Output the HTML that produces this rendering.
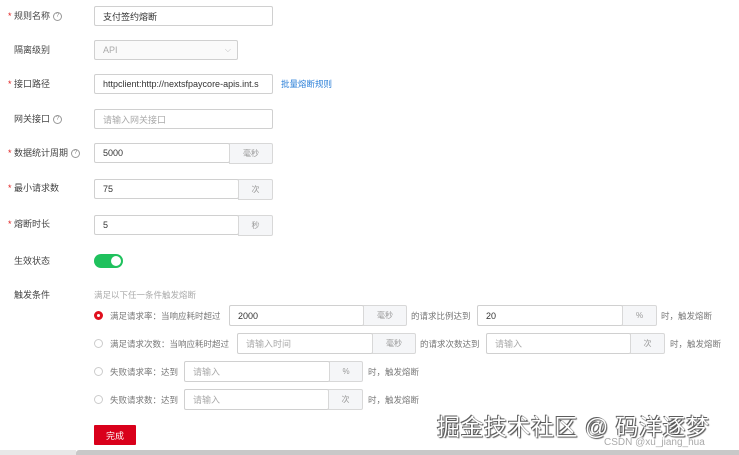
<!DOCTYPE html><html><head><meta charset="utf-8"><style>
*{box-sizing:border-box;margin:0;padding:0}
body{width:739px;height:455px;background:#fff;position:relative;overflow:hidden;font-family:"Liberation Sans","Noto Sans CJK SC",sans-serif;font-size:9px;color:#555}
.a{position:absolute;white-space:nowrap}
.lab{position:absolute;left:14px;font-size:9px;color:#444;line-height:12px}
.lab .s{position:absolute;left:-6px;color:#e02020}
.q{display:inline-block;width:9px;height:9px;border:1px solid #999;border-radius:50%;font-size:6px;line-height:7px;text-align:center;color:#888;margin-left:3px;vertical-align:middle}
.in{position:absolute;border:1px solid #d0d0d0;border-radius:2px;background:#fff;padding-left:8px;font-size:9px;color:#333;display:flex;align-items:center}
.ph{color:#aaa}
.ad{position:absolute;border:1px solid #d8d8d8;background:#f5f6f8;border-radius:0 2px 2px 0;color:#999;font-size:8px;display:flex;align-items:center;justify-content:center}
.r{position:absolute;width:9px;height:9px;border:1px solid #ccc;border-radius:50%}
.t{position:absolute;font-size:8.5px;color:#777;line-height:12px}
</style></head><body>
<div class="lab" style="top:10px"><span class="s">*</span>规则名称<span class="q">?</span></div>
<div class="in" style="left:94px;top:6px;width:179px;height:20px">支付签约熔断</div>
<div class="lab" style="top:44px">隔离级别</div>
<div class="in" style="left:94px;top:40px;width:144px;height:20px;color:#aaa;background:#fafafa">API<span class="a" style="right:6px;color:#bbb;font-size:8px">⌵</span></div>
<div class="lab" style="top:78px"><span class="s">*</span>接口路径</div>
<div class="in" style="left:94px;top:74px;width:179px;height:20px;overflow:hidden">httpclient:http://nextsfpaycore-apis.int.s</div>
<div class="a" style="left:281px;top:78px;color:#2a7fd8;font-size:8.5px">批量熔断规则</div>
<div class="lab" style="top:113px">网关接口<span class="q">?</span></div>
<div class="in" style="left:94px;top:109px;width:179px;height:20px"><span class="ph">请输入网关接口</span></div>
<div class="lab" style="top:147px"><span class="s">*</span>数据统计周期<span class="q">?</span></div>
<div class="in" style="left:94px;top:143px;width:136px;height:20px">5000</div>
<div class="ad" style="left:229px;top:143px;width:44px;height:21px">毫秒</div>
<div class="lab" style="top:182px"><span class="s">*</span>最小请求数</div>
<div class="in" style="left:94px;top:179px;width:145px;height:20px">75</div>
<div class="ad" style="left:238px;top:179px;width:35px;height:21px">次</div>
<div class="lab" style="top:218px"><span class="s">*</span>熔断时长</div>
<div class="in" style="left:94px;top:215px;width:145px;height:20px">5</div>
<div class="ad" style="left:238px;top:215px;width:35px;height:21px">秒</div>
<div class="lab" style="top:255px">生效状态</div>
<div class="a" style="left:94px;top:254px;width:29px;height:14px;background:#1fc15d;border-radius:7px"><div class="a" style="right:2px;top:2px;width:10px;height:10px;background:#fff;border-radius:50%"></div></div>
<div class="lab" style="top:289px">触发条件</div>
<div class="t" style="left:94px;top:289px;color:#aaa">满足以下任一条件触发熔断</div>

<div class="r" style="left:94px;top:311px;border:3px solid #e0101e"></div>
<div class="t" style="left:110px;top:310px">满足请求率：当响应耗时超过</div>
<div class="in" style="left:229px;top:305px;width:135px;height:21px">2000</div>
<div class="ad" style="left:363px;top:305px;width:44px;height:21px">毫秒</div>
<div class="t" style="left:411px;top:310px">的请求比例达到</div>
<div class="in" style="left:477px;top:305px;width:146px;height:21px">20</div>
<div class="ad" style="left:622px;top:305px;width:35px;height:21px">%</div>
<div class="t" style="left:661px;top:310px">时，触发熔断</div>

<div class="r" style="left:94px;top:339px"></div>
<div class="t" style="left:110px;top:338px">满足请求次数：当响应耗时超过</div>
<div class="in" style="left:237px;top:333px;width:136px;height:21px"><span class="ph">请输入时间</span></div>
<div class="ad" style="left:372px;top:333px;width:44px;height:21px">毫秒</div>
<div class="t" style="left:420px;top:338px">的请求次数达到</div>
<div class="in" style="left:486px;top:333px;width:145px;height:21px"><span class="ph">请输入</span></div>
<div class="ad" style="left:630px;top:333px;width:35px;height:21px">次</div>
<div class="t" style="left:670px;top:338px">时，触发熔断</div>

<div class="r" style="left:94px;top:367px"></div>
<div class="t" style="left:110px;top:366px">失败请求率：达到</div>
<div class="in" style="left:184px;top:361px;width:146px;height:21px"><span class="ph">请输入</span></div>
<div class="ad" style="left:329px;top:361px;width:34px;height:21px">%</div>
<div class="t" style="left:368px;top:366px">时，触发熔断</div>

<div class="r" style="left:94px;top:395px"></div>
<div class="t" style="left:110px;top:394px">失败请求数：达到</div>
<div class="in" style="left:184px;top:389px;width:145px;height:21px"><span class="ph">请输入</span></div>
<div class="ad" style="left:328px;top:389px;width:35px;height:21px">次</div>
<div class="t" style="left:368px;top:394px">时，触发熔断</div>

<div class="a" style="left:94px;top:425px;width:42px;height:20px;background:#d9001b;color:#fff;font-size:9px;display:flex;align-items:center;justify-content:center;border-radius:1px">完成</div>

<div class="a" style="left:437px;top:408px;font-size:23px;color:#fff;text-shadow:0 0 1px #333,1px 1px 1px #555,-1px -1px 0 #666;letter-spacing:0.5px">掘金技术社区 @ 码洋逐梦</div>
<div class="a" style="left:604px;top:437px;font-size:10px;color:#aaa">CSDN @xu_jiang_hua</div>
<div class="a" style="left:0;top:450px;width:76px;height:5px;background:#e8e8e8"></div>
<div class="a" style="left:76px;top:450px;width:663px;height:5px;background:#c8c8c8;border-radius:3px 0 0 0"></div>
</body></html>
